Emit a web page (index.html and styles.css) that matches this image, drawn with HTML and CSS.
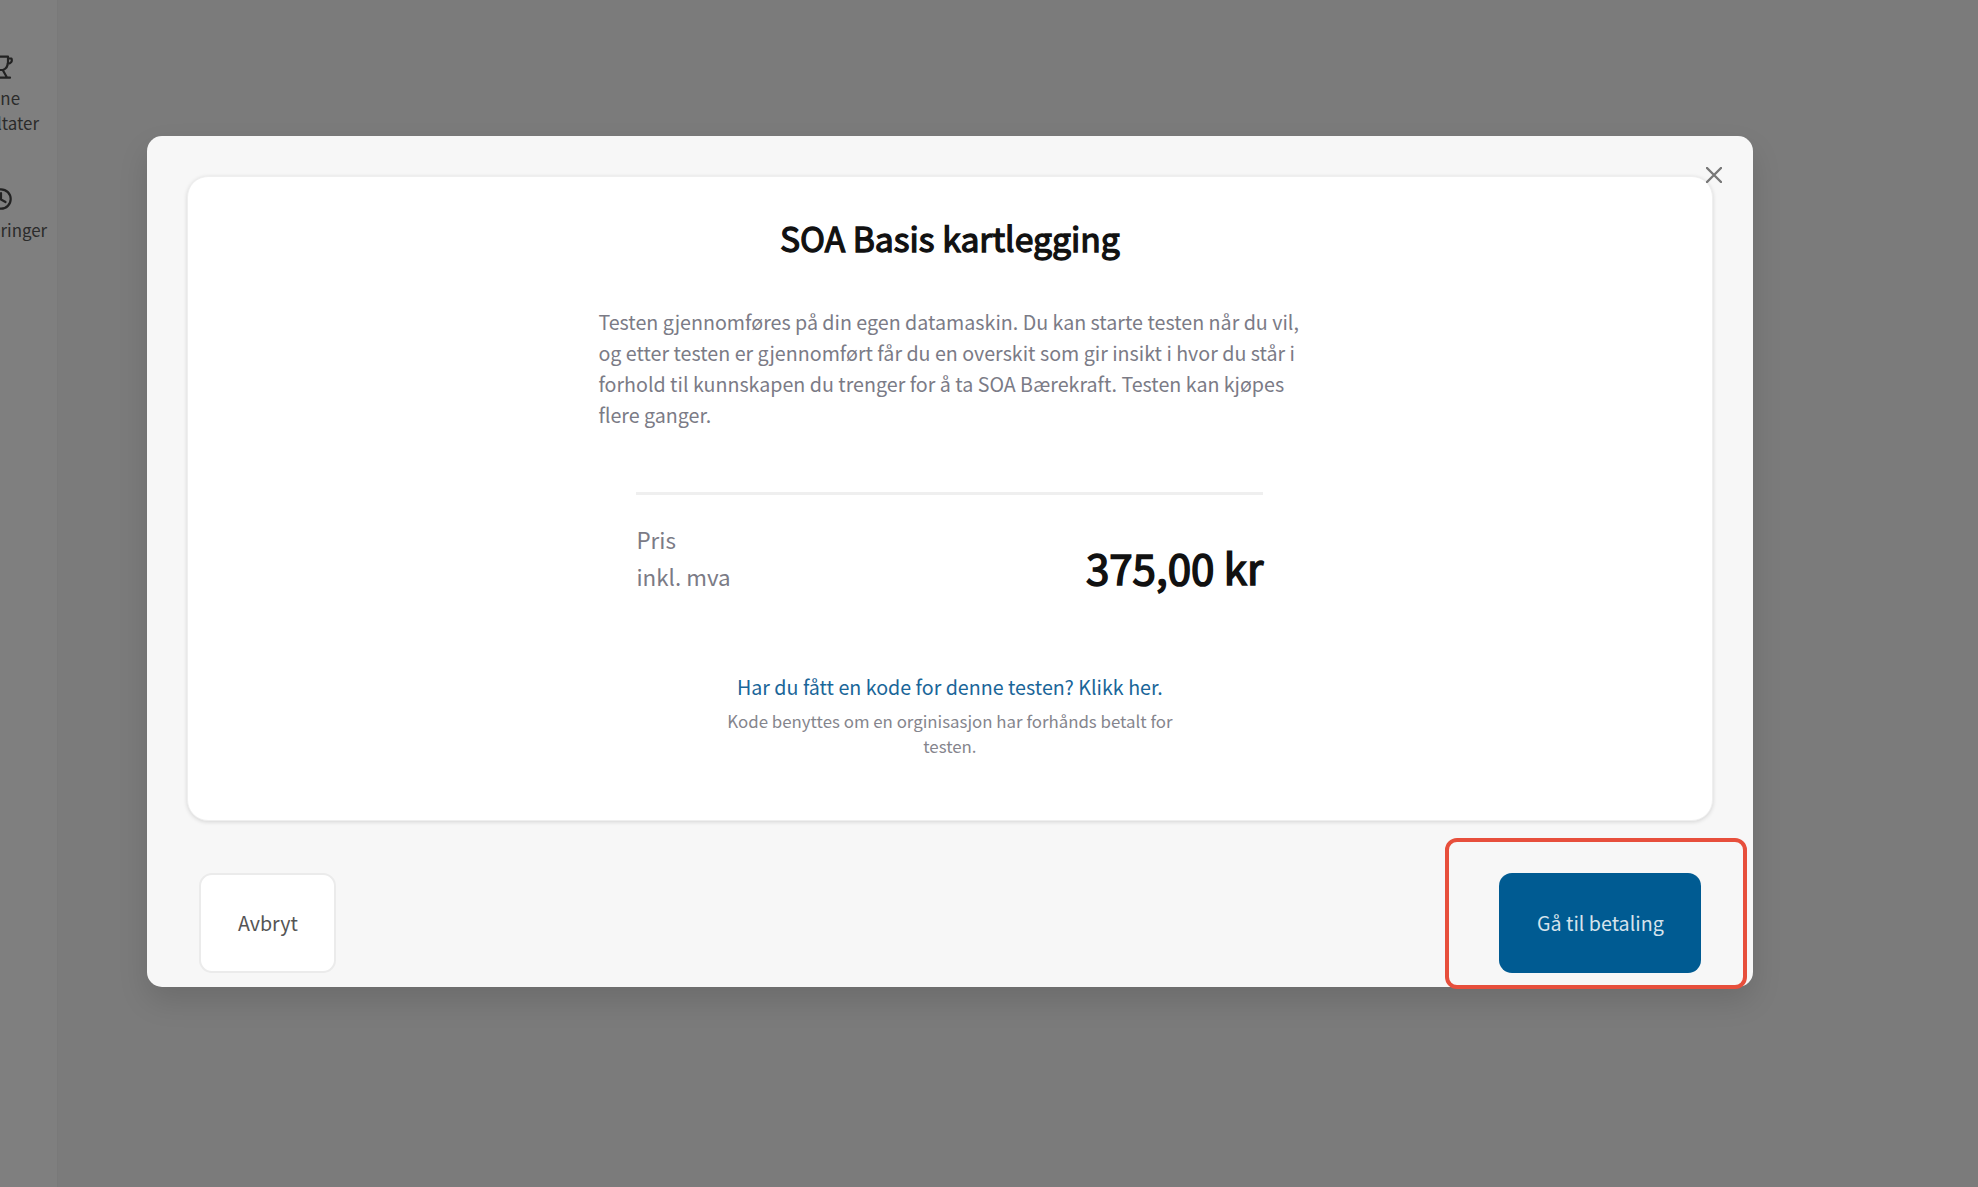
FILE: index.html
```html
<!DOCTYPE html>
<html lang="no">
<head>
    <meta charset="utf-8">
    <title>SOA Basis kartlegging</title>
    <link rel="stylesheet" href="styles.css">
</head>
<body>
    <nav class="sidebar">
        <a class="nav-item">
            <svg class="nav-icon" viewBox="0 0 26 26">
                <path d="M6 2.700h14v5.300c0 4-2.500 7-5 8h-4c-2.500-1-5-4-5-8zM6 4.500H2.500c-1 3 .5 5 4 5.500M20 4.500h3.500c1 3-.5 5-4 5.500M11 16.500l-4 7M15 16.500l4 7M3.500 23.700h18.500" />
            </svg>
            <span>Mine<br>resultater</span>
        </a>
        <a class="nav-item">
            <svg class="nav-icon" viewBox="0 0 26 26">
                <circle cx="13" cy="13" r="9.700" />
                <path d="M13 7v6.500l4.500 2.500" />
            </svg>
            <span>Vurderinger</span>
        </a>
    </nav>

    <div class="modal">
        <button class="close" type="button" aria-label="Lukk">
            <svg viewBox="0 0 16 16"><path d="M1 1l14 14M15 1L1 15" /></svg>
        </button>

        <div class="card">
            <h1>SOA Basis kartlegging</h1>
            <p class="description">Testen gjennomføres på din egen datamaskin. Du kan starte testen når du vil, og etter testen er gjennomført får du en overskit som gir insikt i hvor du står i forhold til kunnskapen du trenger for å ta SOA Bærekraft. Testen kan kjøpes flere ganger.</p>
            <div class="price-row">
                <div class="price-label">Pris<br>inkl. mva</div>
                <div class="price">375,00 kr</div>
            </div>
            <a class="code-link">Har du fått en kode for denne testen? Klikk her.</a>
            <p class="code-info">Kode benyttes om en orginisasjon har forhånds betalt for testen.</p>
        </div>

        <div class="actions">
            <button class="btn btn-cancel" type="button">Avbryt</button>
            <button class="btn btn-pay" type="button">Gå til betaling</button>
        </div>
        <div class="highlight"></div>
    </div>
</body>
</html>
```
FILE: styles.css
```css
* {
    box-sizing: border-box;
}

body {
    margin: 0;
    height: 1187px;
    display: flex;
    align-items: flex-start;
    overflow: hidden;
    background-color: #7b7b7b;
    font-family: "Noto Sans CJK SC", "Noto Sans", sans-serif;
    font-size: 19.66px;
}

h1, p {
    margin: 0;
}

button {
    font-family: inherit;
    font-size: inherit;
}

/* sidebar, partly scrolled out on the left */
.sidebar {
    flex: none;
    width: 113px;
    height: 100%;
    margin-left: -55px;
    padding-top: 54px;
    background-color: #7f7f7f;
    border-right: 1px solid #797979;
}

.nav-item {
    display: flex;
    flex-direction: column;
    align-items: center;
    margin-bottom: 51px;
    color: #2b2b2b;
    font-size: 16.9px;
    line-height: 25px;
    text-align: center;
}

.nav-icon {
    width: 26px;
    height: 26px;
    margin-bottom: 5px;
    fill: none;
    stroke: #222;
    stroke-width: 2.2;
    stroke-linecap: round;
    stroke-linejoin: round;
}

.modal {
    position: relative;
    flex: none;
    width: 1606px;
    height: 851px;
    margin: 135.5px 0 0 89.4px;
    padding: 40px;
    background-color: #f7f7f7;
    border-radius: 15px;
    box-shadow: 0 14px 30px rgba(0, 0, 0, 0.12);
}

.close {
    position: absolute;
    top: 31px;
    right: 31px;
    width: 16px;
    height: 16px;
    padding: 0;
    border: none;
    background: none;
}

.close svg {
    display: block;
    fill: none;
    stroke: #777;
    stroke-width: 2.4;
    stroke-linecap: round;
}

.card {
    display: flex;
    flex-direction: column;
    align-items: center;
    height: 645px;
    padding: 38px 1px 0 0;
    background-color: #fff;
    border: 1px solid #efefef;
    border-radius: 21px;
    box-shadow: 0 1px 4px rgba(0, 0, 0, 0.14);
}

h1 {
    color: #111;
    font-size: 33.7px;
    font-weight: 400;
    line-height: 45px;
    -webkit-text-stroke: 1.3px #111;
}

.description {
    width: 703px;
    margin-top: 46px;
    color: #7b7b86;
    line-height: 31.25px;
}

.price-row {
    display: flex;
    justify-content: space-between;
    align-items: flex-end;
    width: 627px;
    margin-top: 61px;
    padding-top: 26px;
    border-top: 3px solid #efefef;
}

.price-label {
    color: #7b7b86;
    font-size: 22.4px;
    line-height: 37.6px;
}

.price {
    padding-bottom: 4px;
    color: #111;
    font-size: 42.1px;
    line-height: 50px;
    -webkit-text-stroke: 1.6px #111;
}

.code-link {
    margin-top: 75px;
    color: #1a6699;
    line-height: 31.25px;
}

.code-info {
    width: 470px;
    margin-top: 6px;
    color: #85858d;
    font-size: 16.85px;
    line-height: 25px;
    text-align: center;
}

.actions {
    display: flex;
    justify-content: space-between;
    padding: 52px 12px 0;
}

.btn {
    height: 100px;
    border-radius: 13px;
}

.btn-cancel {
    width: 137px;
    background-color: #fff;
    border: 2px solid #ebebeb;
    color: #555;
}

.btn-pay {
    width: 202px;
    background-color: #005b92;
    border: none;
    color: #d6e3ec;
}

/* red marker around the payment button */
.highlight {
    position: absolute;
    right: 6.5px;
    bottom: -2.5px;
    width: 302px;
    height: 151px;
    border: 4px solid #e74f3c;
    border-radius: 12px;
    pointer-events: none;
}
```
